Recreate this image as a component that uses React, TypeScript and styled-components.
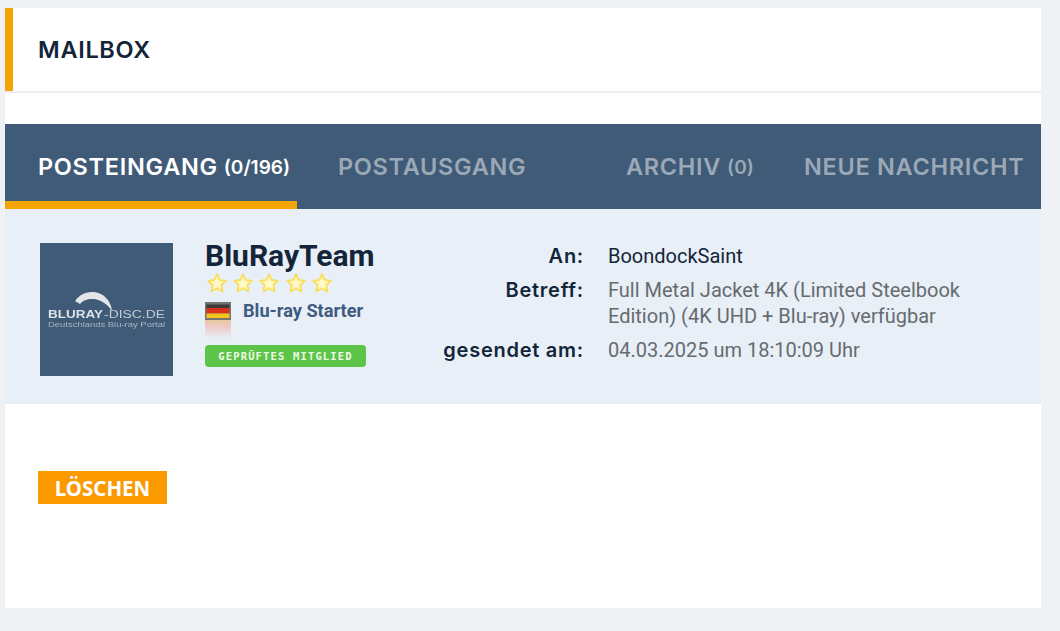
import React from "react";
import styled, { createGlobalStyle } from "styled-components";

const Global = createGlobalStyle`
  html, body { margin: 0; padding: 0; background: #eff1f5; }
  body { font-family: "Roboto", "Liberation Sans", sans-serif; }
`;

const Page = styled.div`
  width: 1060px;
  height: 631px;
  box-sizing: border-box;
  padding: 8px 19px 23px 5px;
  overflow: hidden;
`;
const Card = styled.main`
  background: #fff;
  height: 100%;
  display: flex;
  flex-direction: column;
`;
const Header = styled.header`
  border-bottom: 2px solid #eeeeee;
`;
const HeaderBar = styled.div`
  height: 83px;
  box-sizing: border-box;
  border-left: 8px solid #f4a506;
  display: flex;
  align-items: center;
  padding: 1px 0 0 25px;
`;
const Title = styled.h1`
  margin: 0;
  font: 600 23.5px/1 "Inter", sans-serif;
  letter-spacing: 0.7px;
  color: #14253a;
`;
const Tabs = styled.nav`
  margin-top: 31px;
  height: 85px;
  background: #3f5b78;
  display: grid;
  grid-template-columns: 292px 288px 178px 1fr;
`;
const Tab = styled.div<{ $active?: boolean; $first?: boolean }>`
  box-sizing: border-box;
  padding: ${(p) => (p.$active ? "9px" : "1px")} 0 0 ${(p) => (p.$first ? "33px" : "41px")};
  border-bottom: ${(p) => (p.$active ? "8px solid #f4a506" : "0")};
  display: flex;
  align-items: center;
  gap: 6px;
  white-space: nowrap;
  font: 600 23.5px/1 "Inter", sans-serif;
  letter-spacing: 0.7px;
  color: ${(p) => (p.$active ? "#ffffff" : "#9ba8b6")};
`;
const Count = styled.span`
  font-size: 19px;
  letter-spacing: 0;
`;
const Info = styled.section`
  background: #e8eff6;
  height: 195px;
  box-sizing: border-box;
  padding: 34px 0 0 35px;
  display: flex;
`;
const Avatar = styled.svg`
  width: 133px;
  height: 133px;
  flex: none;
  display: block;
`;
const User = styled.div`
  margin-left: 32px;
  width: 230px;
  flex: none;
  display: flex;
  flex-direction: column;
  align-items: flex-start;
`;
const Name = styled.div`
  font: 700 30px/26px "Roboto", sans-serif;
  color: #14253a;
  margin-bottom: 3px;
`;
const Stars = styled.div`
  display: flex;
  gap: 4.2px;
  height: 22px;
  margin-left: 1px;
`;
const RankRow = styled.div`
  display: flex;
  gap: 12px;
  height: 51px;
  align-items: flex-start;
`;
const Flag = styled.div`
  width: 26px;
  height: 36px;
  margin-top: 8px;
  flex: none;
`;
const Rank = styled.a`
  font: 700 18.2px/26px "Roboto", sans-serif;
  color: #3f5b82;
  margin-top: 4px;
`;
const Badge = styled.div`
  width: 161px;
  height: 22px;
  border-radius: 4px;
  background: #5cc449;
  color: #eef9e4;
  font: 700 10.5px/22px "DejaVu Sans Mono", monospace;
  letter-spacing: 1.15px;
  text-align: center;
`;
const Meta = styled.dl`
  margin: 0;
  display: grid;
  grid-template-columns: 148px 385px;
  column-gap: 25px;
  row-gap: 8px;
  align-content: start;
`;
const Label = styled.dt`
  font: 600 20px/26px "Inter", sans-serif;
  letter-spacing: 0.75px;
  color: #14253a;
  text-align: right;
  white-space: nowrap;
  margin-right: -1px;
`;
const Value = styled.dd<{ $dark?: boolean }>`
  margin: 0;
  font: 400 20px/26px "Roboto", sans-serif;
  color: ${(p) => (p.$dark ? "#14253a" : "#666b70")};
`;
const Actions = styled.div`
  padding: 67px 0 0 33px;
`;
const DeleteButton = styled.button`
  width: 129px;
  height: 33px;
  border: 0;
  padding: 1px 0 0;
  background: #fb9900;
  color: #fff;
  font: 700 20.5px/32px "Noto Sans", "Open Sans", sans-serif;
  display: block;
`;

const Star = () => (
  <svg width="22" height="22" viewBox="0 0 22 22" aria-hidden="true">
    <defs>
      <radialGradient id="starFill" cx="50%" cy="55%" r="55%">
        <stop offset="0%" stopColor="#fffbd8" />
        <stop offset="70%" stopColor="#fff3a8" />
        <stop offset="100%" stopColor="#fde670" />
      </radialGradient>
    </defs>
    <path
      d="M11 2l2.7 5.9 6.3.8-4.6 4.4 1.2 6.4L11 16.4l-5.6 3.1 1.2-6.4L2 8.7l6.3-.8z"
      fill="url(#starFill)"
      stroke="#f8dd55"
      strokeWidth="1.6"
      strokeLinejoin="round"
    />
  </svg>
);

const FlagIcon = () => (
  <Flag>
    <svg width="26" height="36" viewBox="0 0 26 36" aria-hidden="true">
      <defs>
        <linearGradient id="flagFade" x1="0" y1="0" x2="0" y2="1">
          <stop offset="0%" stopColor="#e8c9a0" />
          <stop offset="35%" stopColor="#eec9c4" />
          <stop offset="100%" stopColor="#e8eff6" />
        </linearGradient>
      </defs>
      <rect x="0" y="0" width="26" height="18" fill="#74746e" />
      <rect x="1.5" y="2.5" width="23" height="3.5" fill="#3a3a36" />
      <rect x="1.5" y="6" width="23" height="5.5" fill="#d8301c" />
      <rect x="1.5" y="11.5" width="23" height="4.5" fill="#f4c51c" />
      <rect x="0" y="18" width="26" height="18" fill="url(#flagFade)" />
    </svg>
  </Flag>
);

const Logo = () => (
  <Avatar viewBox="0 0 133 133" role="img" aria-label="Bluray-Disc.de">
    <defs>
      <filter id="soft" x="-5%" y="-5%" width="110%" height="110%">
        <feGaussianBlur stdDeviation="0.5" />
      </filter>
    </defs>
    <rect width="133" height="133" fill="#3f5b78" />
    <g filter="url(#soft)">
      <path
        d="M35 58 C40 51 47 48.5 54 49 C64 50 71 58 72 68 C68 62 62 57 54 56 C48 55.5 43 57 40 61 Z"
        fill="#e2e6ea"
      />
      <text x="8" y="75" fontFamily="Liberation Sans, sans-serif" fontWeight="700" fontSize="10" textLength="55" lengthAdjust="spacingAndGlyphs" fill="#dde2e7">
        BLURAY
      </text>
      <text x="64" y="75" fontFamily="Liberation Sans, sans-serif" fontSize="10" textLength="61" lengthAdjust="spacingAndGlyphs" fill="#c4ccd4">
        -DISC.DE
      </text>
      <text x="8" y="84" fontFamily="Liberation Sans, sans-serif" fontSize="8" textLength="117" lengthAdjust="spacingAndGlyphs" fill="#a8b4c0">
        Deutschlands Blu-ray Portal
      </text>
    </g>
  </Avatar>
);

export default function App() {
  return (
    <Page>
      <Global />
      <Card>
        <Header>
          <HeaderBar>
            <Title>MAILBOX</Title>
          </HeaderBar>
        </Header>
        <Tabs>
          <Tab $active $first>
            POSTEINGANG <Count>(0/196)</Count>
          </Tab>
          <Tab>POSTAUSGANG</Tab>
          <Tab>
            ARCHIV <Count>(0)</Count>
          </Tab>
          <Tab>NEUE NACHRICHT</Tab>
        </Tabs>
        <Info>
          <Logo />
          <User>
            <Name>BluRayTeam</Name>
            <Stars>
              <Star />
              <Star />
              <Star />
              <Star />
              <Star />
            </Stars>
            <RankRow>
              <FlagIcon />
              <Rank>Blu-ray Starter</Rank>
            </RankRow>
            <Badge>GEPRÜFTES MITGLIED</Badge>
          </User>
          <Meta>
            <Label>An:</Label>
            <Value $dark>BoondockSaint</Value>
            <Label>Betreff:</Label>
            <Value>Full Metal Jacket 4K (Limited Steelbook Edition) (4K UHD + Blu-ray) verfügbar</Value>
            <Label>gesendet am:</Label>
            <Value>04.03.2025 um 18:10:09 Uhr</Value>
          </Meta>
        </Info>
        <Actions>
          <DeleteButton>LÖSCHEN</DeleteButton>
        </Actions>
      </Card>
    </Page>
  );
}
